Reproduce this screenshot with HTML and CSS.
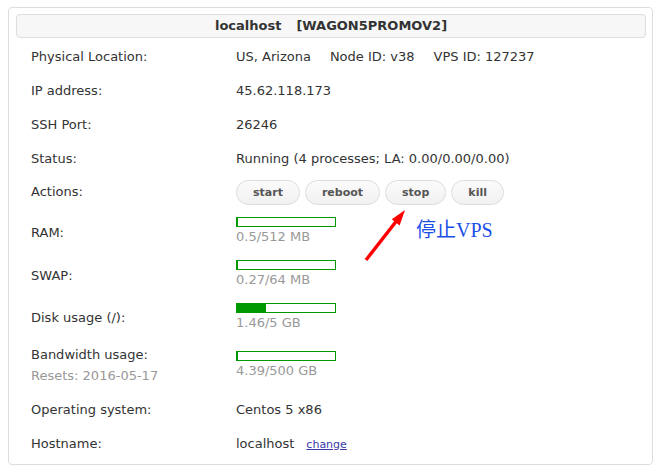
FILE: index.html
```html
<!DOCTYPE html>
<html>
<head>
<meta charset="utf-8">
<title>VPS</title>
<link rel="stylesheet" href="styles.css">
</head>
<body>
<div class="panel">
  <div class="title">localhost<span class="title-gap"></span>[WAGON5PROMOV2]</div>
  <div class="rows">
    <div class="row">
      <div class="label">Physical Location:</div>
      <div class="value">US, Arizona<span class="sep">Node ID: v38</span><span class="sep">VPS ID: 127237</span></div>
    </div>
    <div class="row">
      <div class="label">IP address:</div>
      <div class="value">45.62.118.173</div>
    </div>
    <div class="row">
      <div class="label">SSH Port:</div>
      <div class="value">26246</div>
    </div>
    <div class="row">
      <div class="label">Status:</div>
      <div class="value">Running (4 processes; LA: 0.00/0.00/0.00)</div>
    </div>
    <div class="row row-actions">
      <div class="label">Actions:</div>
      <div class="value buttons">
        <span class="btn">start</span>
        <span class="btn">reboot</span>
        <span class="btn">stop</span>
        <span class="btn">kill</span>
      </div>
    </div>
    <div class="row row-meter">
      <div class="label label-ram">RAM:</div>
      <div class="value">
        <div class="bar"><div class="fill" style="width:0.1%"></div></div>
        <div class="meter-text">0.5/512 MB</div>
      </div>
    </div>
    <div class="row row-meter">
      <div class="label label-swap">SWAP:</div>
      <div class="value">
        <div class="bar"><div class="fill" style="width:0.4%"></div></div>
        <div class="meter-text">0.27/64 MB</div>
      </div>
    </div>
    <div class="row row-meter">
      <div class="label label-disk">Disk usage (/):</div>
      <div class="value">
        <div class="bar"><div class="fill" style="width:29.2%"></div></div>
        <div class="meter-text">1.46/5 GB</div>
      </div>
    </div>
    <div class="row row-bw">
      <div class="label">Bandwidth usage:<div class="resets">Resets: 2016-05-17</div></div>
      <div class="value value-bw">
        <div class="bar"><div class="fill" style="width:0.9%"></div></div>
        <div class="meter-text">4.39/500 GB</div>
      </div>
    </div>
    <div class="row">
      <div class="label">Operating system:</div>
      <div class="value">Centos 5 x86</div>
    </div>
    <div class="row">
      <div class="label">Hostname:</div>
      <div class="value">localhost<a class="change" href="#">change</a></div>
    </div>
  </div>
  <svg class="arrow" width="50" height="60" viewBox="0 0 50 60">
    <line x1="4" y1="52" x2="36" y2="11" stroke="#ff0000" stroke-width="3.4" stroke-linecap="butt"/>
    <polygon points="43,2 37.6,17.4 29.8,11.2" fill="#ff0000"/>
  </svg>
  <div class="note">停止VPS</div>
</div>
</body>
</html>
```
FILE: styles.css
```css
html, body {
  background: #ffffff;
}
body {
  margin: 7px 6px 0 8px;
  font-family: "DejaVu Sans", "Noto Sans", sans-serif;
  font-size: 13px;
  color: #333333;
}
.panel {
  position: relative;
  border: 1px solid #dddddd;
  border-radius: 4px;
  padding: 6px 6px 3px 7px;
}
.title {
  height: 22px;
  line-height: 22px;
  border: 1px solid #dddddd;
  border-radius: 4px;
  background: #f7f7f7;
  text-align: center;
  font-weight: bold;
  font-size: 13px;
  color: #333333;
}
.title-gap {
  display: inline-block;
  width: 15px;
}
.rows {
  margin-top: 2px;
}
.row {
  display: grid;
  grid-template-columns: 205px 1fr;
  padding: 8px 0 8px 15px;
  line-height: 18px;
  height: 18px;
}
.sep {
  margin-left: 19px;
}
.row-actions {
  padding: 0 0 0 15px;
  height: 33px;
}
.row-actions .label {
  padding-top: 7px;
}
.buttons {
  display: flex;
  gap: 5px;
  padding-top: 4px;
}
.btn {
  display: inline-block;
  box-sizing: border-box;
  height: 25px;
  line-height: 23px;
  padding: 0 16px;
  border: 1px solid #dcdcdc;
  border-radius: 13px;
  background: linear-gradient(#fbfbfb, #f1f1f1);
  font-weight: bold;
  font-size: 11px;
  color: #555555;
}
.row-meter {
  padding: 0 0 0 15px;
  height: 43px;
}
.row-meter .value {
  padding-top: 8px;
}
.label-ram {
  padding-top: 15px;
}
.label-swap {
  padding-top: 15px;
}
.label-disk {
  padding-top: 14px;
}
.bar {
  box-sizing: border-box;
  width: 100px;
  height: 10px;
  border: 1px solid #009900;
  background: #ffffff;
}
.fill {
  height: 100%;
  background: #009900;
}
.meter-text {
  margin-top: 1px;
  color: #999999;
  line-height: 18px;
}
.row-bw {
  padding: 0 0 0 15px;
  height: 55px;
}
.row-bw .label {
  padding-top: 8px;
}
.resets {
  margin-top: 3px;
  font-size: 13px;
  color: #999999;
}
.value-bw {
  padding-top: 13px;
}
.change {
  margin-left: 12px;
  font-size: 11px;
  color: #3a3aa8;
  text-decoration: underline;
}
.arrow {
  position: absolute;
  left: 353px;
  top: 200px;
}
.note {
  position: absolute;
  left: 407px;
  top: 210px;
  font-family: "Liberation Serif", "Noto Sans CJK SC", serif;
  font-size: 20px;
  line-height: 24px;
  color: #1a4fe8;
}
```
